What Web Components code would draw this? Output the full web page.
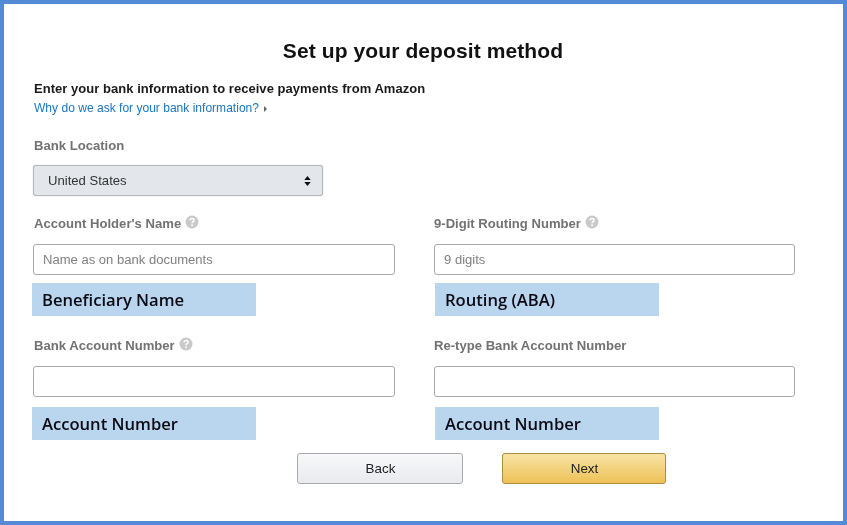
<!DOCTYPE html>
<html lang="en"><head><meta charset="utf-8"><title>Set up your deposit method</title>
<style>html,body{margin:0;padding:0;background:#fff}</style></head>
<body>
<deposit-page>
  <page-heading>Set up your deposit method</page-heading>
  <intro-text link="Why do we ask for your bank information?">Enter your bank information to receive payments from Amazon</intro-text>
  <select-field label="Bank Location" value="United States"></select-field>
  <form-grid>
    <text-field label="Account Holder's Name" placeholder="Name as on bank documents" help note="Beneficiary Name" style="--note-x:-1px;--note-gap:8px;--label-x:1px"></text-field>
    <text-field label="9-Digit Routing Number" placeholder="9 digits" help note="Routing (ABA)" style="--note-x:1px;--note-gap:8px"></text-field>
    <text-field label="Bank Account Number" help note="Account Number" style="--note-x:-1px;--note-gap:10px;--label-x:1px"></text-field>
    <text-field label="Re-type Bank Account Number" note="Account Number" style="--note-x:1px;--note-gap:10px"></text-field>
  </form-grid>
  <button-row>
    <action-button>Back</action-button>
    <action-button primary>Next</action-button>
  </button-row>
</deposit-page>
<script>
const sans='"Liberation Sans",Arial,sans-serif';
function def(name,html,init){
  customElements.define(name,class extends HTMLElement{
    constructor(){super();this.attachShadow({mode:'open'}).innerHTML=html}
    connectedCallback(){if(init)init(this,this.shadowRoot)}
  });
}
def('deposit-page',`<style>:host{display:block;box-sizing:border-box;width:847px;height:525px;border:4px solid #538bd7;padding:34px 47px 0 29px;background:#fff;font-family:${sans};overflow:hidden;filter:blur(.35px)}</style><slot></slot>`);
def('page-heading',`<style>:host{display:block;text-align:center;font-size:21px;line-height:26px;font-weight:700;color:#111;letter-spacing:.1px;padding-left:17px}</style><slot></slot>`);
def('intro-text',`<style>:host{display:block;margin-top:16px}
.m{font-size:13px;line-height:17px;font-weight:700;color:#1a1a1a;letter-spacing:.04px;padding-left:1px}
.l{display:flex;align-items:center;gap:5px;margin-top:3px;padding-left:1px;font-size:12.05px;line-height:17px;color:#1a76c0}
.l svg{display:block;margin-top:1px}</style>
<div class="m"><slot></slot></div><div class="l"><span id="a"></span><svg width="3" height="6" viewBox="0 0 3 6"><path d="M0 0l3 3-3 3z" fill="#666"/></svg></div>`,(h,s)=>{s.getElementById('a').textContent=h.getAttribute('link')});
def('select-field',`<style>:host{display:block;margin-top:20px}
.t{font-size:13.1px;line-height:17px;font-weight:700;color:#727272;padding-left:1px}
.b{box-sizing:border-box;width:290px;height:31px;margin-top:11px;display:flex;align-items:center;justify-content:space-between;padding:0 11px 0 14px;background:#e3e6ea;border:1px solid #b5b7ba;border-radius:3px;box-shadow:0 0 1px #aaa;font-size:13.1px;color:#333}
svg{display:block}</style>
<div class="t" id="t"></div><div class="b"><span id="v"></span><svg width="7" height="10" viewBox="0 0 7 10"><path d="M3.500 0l3.200 4H.3zM3.500 10L.3 6h6.400z" fill="#111"/></svg></div>`,(h,s)=>{s.getElementById('t').textContent=h.getAttribute('label');s.getElementById('v').textContent=h.getAttribute('value')});
def('form-grid',`<style>:host{display:grid;grid-template-columns:362px 361px;column-gap:39px;row-gap:20px;margin-top:18px}</style><slot></slot>`);
def('text-field',`<style>:host{display:block}
.t{display:flex;align-items:center;gap:4px;height:19px;padding-left:var(--label-x,0);font-size:13.1px;font-weight:700;color:#727272}
svg{display:block;margin-top:-3px}
.i{box-sizing:border-box;height:31px;margin-top:11px;display:flex;align-items:center;padding:0 9px;background:#fff;border:1px solid #a9a9a9;border-radius:3px;font-size:13.05px;color:#808080}
.n{box-sizing:border-box;width:224px;height:33px;margin:var(--note-gap,8px) 0 0 var(--note-x,0);padding-left:10px;background:#bad5ee;font:600 16.6px/33px "Open Sans",sans-serif;color:#0a0a14}</style>
<div class="t"><span id="l"></span><svg id="h" width="14" height="14" viewBox="0 0 14 14"><circle cx="7" cy="7" r="6.5" fill="#c9c9c9"/><path d="M5 5.400c.1-1.200 1-1.900 2.100-1.900 1.200 0 2 .7 2 1.700 0 1.500-2 1.500-2 3" fill="none" stroke="#fff" stroke-width="1.500"/><circle cx="7.100" cy="10.300" r=".95" fill="#fff"/></svg></div>
<div class="i" id="i"></div><div class="n" id="n"></div>`,(h,s)=>{s.getElementById('l').textContent=h.getAttribute('label');s.getElementById('i').textContent=h.getAttribute('placeholder')||'';s.getElementById('n').textContent=h.getAttribute('note');if(!h.hasAttribute('help'))s.getElementById('h').style.display='none'});
def('button-row',`<style>:host{display:flex;justify-content:flex-start;gap:39px;margin:13px 0 0 264px}</style><slot></slot>`);
def('action-button',`<style>:host{box-sizing:border-box;display:flex;align-items:center;justify-content:center;width:166px;height:31px;padding-left:1px;border:1px solid #a8a9ac;border-radius:3px;background:linear-gradient(#f7f8fa,#e8eaee);font-size:13.4px;color:#222}
:host([primary]){width:164px;border-color:#b08d3c;background:linear-gradient(#f8e3a6,#eec156)}</style><slot></slot>`);
</script>
</body></html>
